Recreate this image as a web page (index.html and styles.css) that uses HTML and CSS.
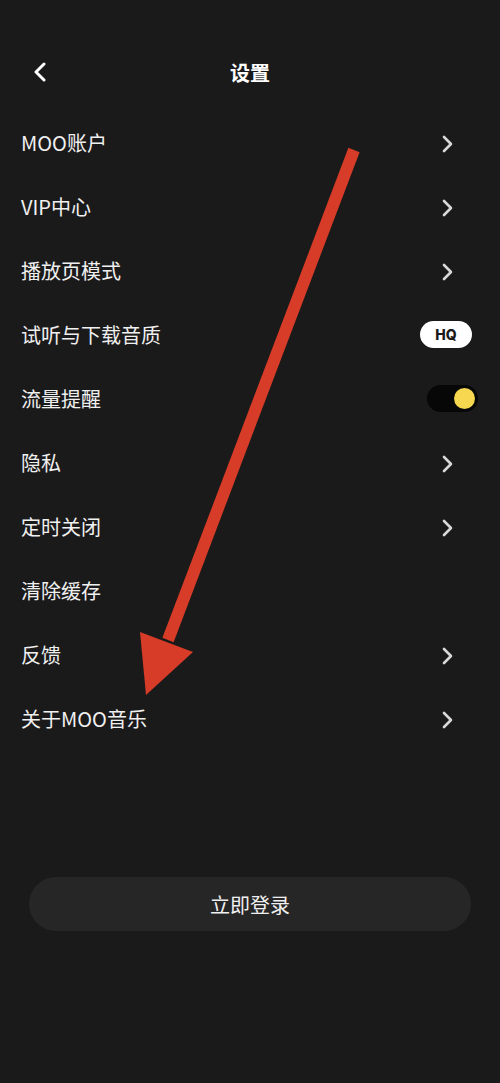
FILE: index.html
```html
<!DOCTYPE html>
<html lang="zh">
<head>
<meta charset="utf-8">
<link rel="stylesheet" href="styles.css">
</head>
<body>
<div class="page">
  <header class="header">
    <svg class="back" viewBox="0 0 14 20" width="14" height="20"><path d="M11 2 L3 10 L11 18" fill="none" stroke="#fff" stroke-width="3" stroke-linecap="round" stroke-linejoin="round"/></svg>
    <div class="title">设置</div>
  </header>
  <ul class="list">
    <li class="row"><span>MOO账户</span><svg class="chev" viewBox="0 0 12 20" width="12" height="20"><path d="M3 3 L10 10 L3 17" fill="none" stroke="#d9d9d9" stroke-width="2.6" stroke-linecap="round" stroke-linejoin="round"/></svg></li>
    <li class="row"><span>VIP中心</span><svg class="chev" viewBox="0 0 12 20" width="12" height="20"><path d="M3 3 L10 10 L3 17" fill="none" stroke="#d9d9d9" stroke-width="2.6" stroke-linecap="round" stroke-linejoin="round"/></svg></li>
    <li class="row"><span>播放页模式</span><svg class="chev" viewBox="0 0 12 20" width="12" height="20"><path d="M3 3 L10 10 L3 17" fill="none" stroke="#d9d9d9" stroke-width="2.6" stroke-linecap="round" stroke-linejoin="round"/></svg></li>
    <li class="row"><span>试听与下载音质</span><span class="hq">HQ</span></li>
    <li class="row"><span>流量提醒</span><span class="toggle"><span class="knob"></span></span></li>
    <li class="row"><span>隐私</span><svg class="chev" viewBox="0 0 12 20" width="12" height="20"><path d="M3 3 L10 10 L3 17" fill="none" stroke="#d9d9d9" stroke-width="2.6" stroke-linecap="round" stroke-linejoin="round"/></svg></li>
    <li class="row"><span>定时关闭</span><svg class="chev" viewBox="0 0 12 20" width="12" height="20"><path d="M3 3 L10 10 L3 17" fill="none" stroke="#d9d9d9" stroke-width="2.6" stroke-linecap="round" stroke-linejoin="round"/></svg></li>
    <li class="row"><span>清除缓存</span></li>
    <li class="row"><span>反馈</span><svg class="chev" viewBox="0 0 12 20" width="12" height="20"><path d="M3 3 L10 10 L3 17" fill="none" stroke="#d9d9d9" stroke-width="2.6" stroke-linecap="round" stroke-linejoin="round"/></svg></li>
    <li class="row"><span>关于MOO音乐</span><svg class="chev" viewBox="0 0 12 20" width="12" height="20"><path d="M3 3 L10 10 L3 17" fill="none" stroke="#d9d9d9" stroke-width="2.6" stroke-linecap="round" stroke-linejoin="round"/></svg></li>
  </ul>
  <div class="btn-wrap"><button class="login">立即登录</button></div>
  <svg class="annot" viewBox="0 0 500 1083" width="500" height="1083">
    <line x1="354" y1="150" x2="168" y2="640" stroke="#d63c27" stroke-width="12"/>
    <polygon points="140,632 193,652 146,695" fill="#d63c27"/>
  </svg>
</div>
</body>
</html>
```

FILE: styles.css
```css
* { box-sizing: border-box; }
html, body {
  margin: 0;
  padding: 0;
  background: #1b1a1b;
}
body {
  font-family: "Noto Sans CJK SC", "Noto Sans", sans-serif;
  color: #f2f2f2;
}
.page {
  position: relative;
  width: 500px;
  height: 1083px;
  overflow: hidden;
}
.header {
  position: relative;
  margin-top: 40px;
  height: 64px;
  display: flex;
  align-items: center;
  justify-content: center;
}
.back {
  position: absolute;
  left: 33px;
  top: 22px;
}
.title {
  font-size: 20px;
  font-weight: 700;
  color: #fff;
}
.list {
  list-style: none;
  margin: 6px 0 0;
  padding: 0;
}
.row {
  height: 64px;
  display: flex;
  align-items: center;
  justify-content: space-between;
  padding: 0 22px 0 21px;
  font-size: 20px;
  color: #f0f0f0;
}
.chev {
  margin-right: 25px;
  margin-top: 3px;
}
.hq {
  width: 52px;
  height: 27px;
  border-radius: 14px;
  background: #fff;
  color: #1b1a1b;
  font-family: "Inter", "Noto Sans", sans-serif;
  font-weight: 800;
  font-size: 14px;
  display: flex;
  align-items: center;
  justify-content: center;
  margin-right: 6px;
  margin-top: 1px;
}
.toggle {
  width: 51px;
  height: 27px;
  border-radius: 14px;
  background: #070707;
  display: flex;
  align-items: center;
  justify-content: flex-end;
  padding-right: 3px;
  margin-top: 1px;
}
.knob {
  width: 21px;
  height: 21px;
  border-radius: 50%;
  background: #f6d74f;
}
.btn-wrap {
  margin-top: 127px;
  padding: 0 29px;
}
.login {
  width: 100%;
  height: 54px;
  border: none;
  border-radius: 27px;
  background: #272627;
  color: #f0f0f0;
  font-family: "Noto Sans CJK SC", sans-serif;
  font-size: 20px;
}
.annot {
  position: absolute;
  left: 0;
  top: 0;
  pointer-events: none;
}
```
